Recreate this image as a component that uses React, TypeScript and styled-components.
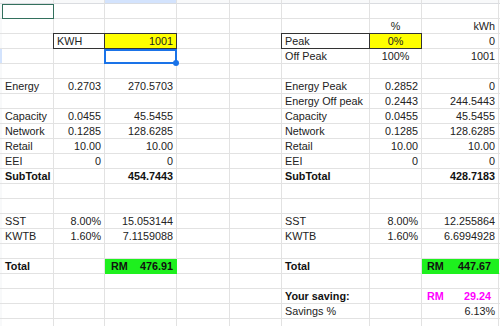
import React from 'react';
import styled, { createGlobalStyle, css } from 'styled-components';

const GlobalStyle = createGlobalStyle`
  html, body { margin: 0; padding: 0; background: #ffffff; }
  body { font-family: "Liberation Sans", Arial, sans-serif; }
  #root { width: 500px; height: 326px; overflow: hidden; }
`;

type Align = 'left' | 'right' | 'center';
type Ring = 'active' | 'focus';

interface CellSpec {
  t?: string;
  a?: Align;
  b?: boolean;
  bg?: string;
  fg?: string;
  boxed?: boolean;
  acc?: [string, string];
  pl?: number;
  pr?: number;
  ring?: Ring;
}

const COLS = ['A', 'B', 'C', 'D', 'E', 'F', 'G', 'H', 'I'];
const YELLOW = '#ffff00';
const GREEN = '#1ef01e';
const MAGENTA = '#ff00ff';
const GRID = '#e2e2e2';
const INK = '#333333';

const Sheet = styled.div`
  display: grid;
  grid-template-columns: 2px 52px 51px 72px 53px 52px 88px 52px 77px 1fr;
  grid-template-rows: 4px;
  grid-auto-rows: 15px;
  width: 500px;
  height: 326px;
  overflow: hidden;
  font-size: 10.8px;
  color: #222222;
`;

const Corner = styled.div`
  background: #f8f9fa;
  border-bottom: 1px solid #dadce0;
`;

const ColHead = styled.div<{ $active?: boolean }>`
  background: ${(p) => (p.$active ? '#d3e3fd' : '#f8f9fa')};
  border-right: 1px solid ${GRID};
  border-bottom: 1px solid #dadce0;
`;

const RowHead = styled.div<{ $active?: boolean }>`
  background: ${(p) => (p.$active ? '#d3e3fd' : '#f8f9fa')};
  border-bottom: 1px solid ${GRID};
`;

const justify: Record<Align, string> = {
  left: 'flex-start',
  right: 'flex-end',
  center: 'center',
};

const Cell = styled.div<{
  $align: Align;
  $bold?: boolean;
  $bg?: string;
  $fg?: string;
  $boxed?: boolean;
  $pl: number;
  $pr: number;
  $ring?: Ring;
}>`
  box-sizing: border-box;
  display: flex;
  align-items: center;
  justify-content: ${(p) => justify[p.$align]};
  padding: 0 ${(p) => p.$pr}px 0 ${(p) => p.$pl}px;
  border-right: 1px solid ${(p) => p.$bg ?? GRID};
  border-bottom: 1px solid ${(p) => p.$bg ?? GRID};
  background: ${(p) => p.$bg ?? 'transparent'};
  color: ${(p) => p.$fg ?? (p.$bold ? '#111111' : '#222222')};
  font-weight: ${(p) => (p.$bold ? 700 : 400)};
  line-height: 14px;
  white-space: nowrap;
  min-width: 0;

  ${(p) =>
    p.$boxed &&
    css`
      border-right-color: ${INK};
      border-bottom-color: ${INK};
      box-shadow: -1px -1px 0 0 ${INK}, -1px 0 0 0 ${INK}, 0 -1px 0 0 ${INK};
    `}

  ${(p) =>
    p.$ring === 'active' &&
    css`
      position: relative;
      &::after {
        content: '';
        position: absolute;
        top: 0;
        left: -1px;
        right: -1px;
        bottom: -1px;
        border: 2px solid #1a73e8;
        pointer-events: none;
      }
      &::before {
        content: '';
        position: absolute;
        width: 6px;
        height: 6px;
        right: -3px;
        bottom: -3px;
        border-radius: 50%;
        background: #1a73e8;
        z-index: 2;
      }
    `}

  ${(p) =>
    p.$ring === 'focus' &&
    css`
      position: relative;
      &::after {
        content: '';
        position: absolute;
        top: 0;
        left: 0;
        right: -1px;
        bottom: -1px;
        border: 1px solid #33705d;
        pointer-events: none;
      }
    `}
`;

const Accounting = styled.span`
  display: flex;
  flex: 1;
  justify-content: space-between;
`;

const label = (t: string, b = false): CellSpec => ({ t, b });
const num = (t: string, b = false): CellSpec => ({ t, a: 'right', b });

const twin = (
  name: string,
  rate: string,
  left: string,
  right: string,
  bold = false
): Record<string, CellSpec> => ({
  A: label(name, bold),
  B: num(rate),
  C: num(left, bold),
  F: label(name, bold),
  G: num(rate),
  H: num(right, bold),
});

const rows: Record<string, CellSpec>[] = [
  { A: { ring: 'focus' } },
  { G: { t: '%', a: 'center' }, H: num('kWh') },
  {
    B: { t: 'KWH', boxed: true },
    C: { t: '1001', a: 'right', bg: YELLOW, boxed: true },
    F: { t: 'Peak', boxed: true },
    G: { t: '0%', a: 'center', bg: YELLOW, boxed: true },
    H: num('0'),
  },
  { C: { ring: 'active' }, F: label('Off Peak'), G: { t: '100%', a: 'center' }, H: num('1001') },
  {},
  {
    A: label('Energy'),
    B: num('0.2703'),
    C: num('270.5703'),
    F: label('Energy Peak'),
    G: num('0.2852'),
    H: num('0'),
  },
  { F: label('Energy Off peak'), G: num('0.2443'), H: num('244.5443') },
  twin('Capacity', '0.0455', '45.5455', '45.5455'),
  twin('Network', '0.1285', '128.6285', '128.6285'),
  twin('Retail', '10.00', '10.00', '10.00'),
  twin('EEI', '0', '0', '0'),
  {
    A: label('SubTotal', true),
    C: num('454.7443', true),
    F: label('SubTotal', true),
    H: num('428.7183', true),
  },
  {},
  {},
  twin('SST', '8.00%', '15.053144', '12.255864'),
  twin('KWTB', '1.60%', '7.1159088', '6.6994928'),
  {},
  {
    A: label('Total', true),
    C: { acc: ['RM', '476.91'], b: true, bg: GREEN, pl: 6, pr: 3 },
    F: label('Total', true),
    H: { acc: ['RM', '447.67'], b: true, bg: GREEN, pl: 5, pr: 7 },
  },
  {},
  {
    F: label('Your saving:', true),
    H: { acc: ['RM', '29.24'], b: true, fg: MAGENTA, pl: 5, pr: 7 },
  },
  { F: label('Savings %'), H: num('6.13%') },
  {},
];

export default function App() {
  return (
    <>
      <GlobalStyle />
      <Sheet>
        <Corner />
        {COLS.map((c) => (
          <ColHead key={c} $active={c === 'C'} />
        ))}
        {rows.map((row, i) => (
          <React.Fragment key={i}>
            <RowHead $active={i === 3} />
            {COLS.map((c) => {
              const s = row[c] ?? {};
              return (
                <Cell
                  key={c}
                  $align={s.a ?? 'left'}
                  $bold={s.b}
                  $bg={s.bg}
                  $fg={s.fg}
                  $boxed={s.boxed}
                  $pl={s.pl ?? 3}
                  $pr={s.pr ?? 3}
                  $ring={s.ring}
                >
                  {s.acc ? (
                    <Accounting>
                      <span>{s.acc[0]}</span>
                      <span>{s.acc[1]}</span>
                    </Accounting>
                  ) : (
                    s.t
                  )}
                </Cell>
              );
            })}
          </React.Fragment>
        ))}
      </Sheet>
    </>
  );
}
